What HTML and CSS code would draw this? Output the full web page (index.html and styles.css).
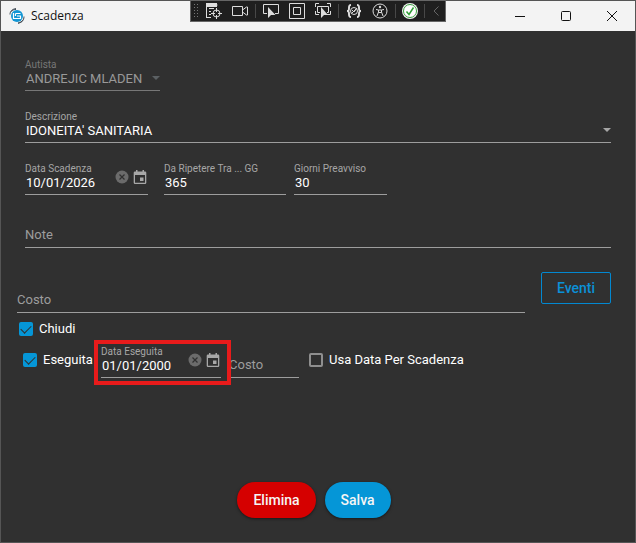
FILE: index.html
```html
<!DOCTYPE html>
<html lang="it">
<head>
<meta charset="utf-8">
<meta name="viewport" content="width=device-width, initial-scale=1">
<title>Scadenza</title>
<link rel="stylesheet" href="styles.css">
</head>
<body>
<div class="window">
  <header class="titlebar">
    <svg class="app-icon" viewBox="0 0 16 16" aria-hidden="true">
      <circle cx="8" cy="8" r="6" fill="#1296d4"/>
      <path d="M1 6.500C1 3 3.500 1 7 .6M2.200 3.500C3.500 2 5 1.500 7 1.400M15 8.500c0 4-2.500 6-6 6.900M14 12.300c-1.200 1.500-2.800 2.200-4.700 2.400" fill="none" stroke="#3c4650" stroke-width="1"/>
      <path d="M4.500 5v5.500h7V8H8M6.500 5.500h5M6.500 5.500v2.500" fill="none" stroke="#fff" stroke-width="1.200"/>
    </svg>
    <h1 class="title">Scadenza</h1>
    <div class="caption-buttons">
      <button type="button" class="caption" aria-label="Riduci a icona"><svg viewBox="0 0 12 12"><path d="M1 6.500h10"/></svg></button>
      <button type="button" class="caption" aria-label="Ingrandisci"><svg viewBox="0 0 12 12"><rect x="1.500" y="1.500" width="9" height="9" rx="1"/></svg></button>
      <button type="button" class="caption" aria-label="Chiudi finestra"><svg viewBox="0 0 12 12"><path d="M1 1l10 10M11 1L1 11"/></svg></button>
    </div>
  </header>

  <div class="debugbar" role="toolbar" aria-label="Strumenti">
    <span class="grip"></span>
    <button type="button" class="tool" aria-label="Albero visuale"><svg viewBox="0 0 16 16"><path d="M.5 1v14M.5 2h11M3 5.500h5M3 8.500h2M3 11.500h2M.5 14.500H5"/><path d="M0 0h11v4H0z" fill="#ddd" stroke="none"/><circle cx="10.500" cy="10.500" r="3.500"/><path d="M10.500 5v4M10.500 12v4M5 10.500h4M12 10.500h4"/></svg></button>
    <button type="button" class="tool" aria-label="Registra"><svg viewBox="0 0 16 16"><path d="M.5 3.500h10v9H.5zM10.500 7l4-3h1v8h-1l-4-3"/></svg></button>
    <span class="separator"></span>
    <button type="button" class="tool" aria-label="Seleziona elemento"><svg viewBox="0 0 16 16"><path d="M4 10.500H.5v-9h15v9H12"/><path d="M5 4v11l3-3h4.500z" fill="#ddd" stroke="none"/></svg></button>
    <button type="button" class="tool" aria-label="Mostra layout"><svg viewBox="0 0 16 16"><path d="M.5 .5h15v15H.5zM4.500 4.500h7v7h-7z"/></svg></button>
    <button type="button" class="tool" aria-label="Traccia elemento attivo"><svg viewBox="0 0 16 16"><path d="M.5 4V.5H4M12 .5h3.500V4M.5 8v3.500H4M15.500 8v3.500H12M5 9.500H2.500v-6h11v6H12"/><path d="M6 4v11l3-3h4z" fill="#ddd" stroke="none"/></svg></button>
    <span class="separator"></span>
    <button type="button" class="tool" aria-label="Errori di binding"><svg viewBox="0 0 16 16"><path d="M5 2C3 2 3 3 3 5s0 3-2 3c2 0 2 1 2 3s0 3 2 3M11 2c2 0 2 1 2 3s0 3 2 3c-2 0-2 1-2 3s0 3-2 3" stroke-width="2"/><circle cx="8" cy="8" r="3.500"/><path d="M5.500 10.500l5-5M6 7l2 2 3-4"/></svg></button>
    <button type="button" class="tool" aria-label="Accessibilità"><svg viewBox="0 0 16 16"><circle cx="8" cy="8" r="7"/><circle cx="8" cy="4" r="1.200" fill="#ddd" stroke="none"/><path d="M4 6.500l2.500 .5v2L5 13M12 6.500L9.500 7v2l1.500 4M6.500 7h3M6.500 9.500h3"/></svg></button>
    <span class="separator"></span>
    <button type="button" class="tool tool-check" aria-label="Ricaricamento rapido"><svg viewBox="0 0 16 16"><circle cx="8" cy="8" r="8" fill="#eee" stroke="none"/><circle cx="8" cy="8" r="6.500" stroke="#3aa13f" fill="#fff"/><path d="M4.500 8.500l2.500 3L11.500 4.500" stroke="#2f9e36" stroke-width="1.500"/></svg></button>
    <span class="separator"></span>
    <button type="button" class="tool tool-collapse" aria-label="Comprimi"><svg viewBox="0 0 16 16"><path d="M10.500 3.500L6 8l4.500 4.500" stroke="#666"/></svg></button>
  </div>

  <form class="form">
    <div class="field field-driver">
      <label for="autista">Autista</label>
      <div class="control">
        <select id="autista" disabled><option>ANDREJIC MLADEN</option></select>
        <svg class="arrow" viewBox="0 0 8 4" aria-hidden="true"><path d="M0 0h8L4 4z"/></svg>
      </div>
    </div>

    <div class="field">
      <label for="descrizione">Descrizione</label>
      <div class="control">
        <select id="descrizione"><option>IDONEITA' SANITARIA</option></select>
        <svg class="arrow" viewBox="0 0 8 4" aria-hidden="true"><path d="M0 0h8L4 4z"/></svg>
      </div>
    </div>

    <div class="row-dates">
      <div class="field field-date">
        <label for="scadenza">Data Scadenza</label>
        <div class="control">
          <input id="scadenza" type="text" value="10/01/2026">
          <button type="button" class="icon-button" aria-label="Cancella data scadenza"><svg viewBox="0 0 14 14"><circle cx="7" cy="7" r="6.500" fill="#6b6b6b"/><path d="M4.500 4.500l5 5M9.500 4.500l-5 5" stroke="#303030" stroke-width="1.200"/></svg></button>
          <button type="button" class="icon-button" aria-label="Scegli data scadenza"><svg viewBox="0 0 14 14"><path d="M3 0h1.500v1.500h5V0H11v1.500h1A1.300 1.300 0 0 1 13.300 2.800V12.700A1.300 1.300 0 0 1 12 14H2A1.300 1.300 0 0 1 .7 12.700V2.800A1.300 1.300 0 0 1 2 1.500h1zM2 5v7.700h10V5zM7 7.500h3.500V11H7z" fill="#a8a8a8" fill-rule="evenodd"/></svg></button>
        </div>
      </div>
      <div class="field field-repeat">
        <label for="ripetere">Da Ripetere Tra ... GG</label>
        <div class="control"><input id="ripetere" type="text" value="365"></div>
      </div>
      <div class="field field-notice">
        <label for="preavviso">Giorni Preavviso</label>
        <div class="control"><input id="preavviso" type="text" value="30"></div>
      </div>
    </div>

    <div class="field field-empty field-note">
      <input type="text" aria-label="Note" placeholder="Note">
    </div>

    <div class="row-cost">
      <div class="field field-empty field-grow">
        <input type="text" aria-label="Costo" placeholder="Costo">
      </div>
      <button type="button" class="outlined">Eventi</button>
    </div>

    <label class="check check-close"><input type="checkbox" checked><span>Chiudi</span></label>

    <div class="row-done">
      <label class="check"><input type="checkbox" checked><span>Eseguita</span></label>
      <div class="field field-done highlighted">
        <label for="eseguita">Data Eseguita</label>
        <div class="control">
          <input id="eseguita" type="text" value="01/01/2000">
          <button type="button" class="icon-button" aria-label="Cancella data eseguita"><svg viewBox="0 0 14 14"><circle cx="7" cy="7" r="6.500" fill="#6b6b6b"/><path d="M4.500 4.500l5 5M9.500 4.500l-5 5" stroke="#303030" stroke-width="1.200"/></svg></button>
          <button type="button" class="icon-button" aria-label="Scegli data eseguita"><svg viewBox="0 0 14 14"><path d="M3 0h1.500v1.500h5V0H11v1.500h1A1.300 1.300 0 0 1 13.300 2.800V12.700A1.300 1.300 0 0 1 12 14H2A1.300 1.300 0 0 1 .7 12.700V2.800A1.300 1.300 0 0 1 2 1.500h1zM2 5v7.700h10V5zM7 7.500h3.500V11H7z" fill="#a8a8a8" fill-rule="evenodd"/></svg></button>
        </div>
      </div>
      <div class="field field-empty field-done-cost">
        <input type="text" aria-label="Costo eseguita" placeholder="Costo">
      </div>
      <label class="check check-use"><input type="checkbox"><span>Usa Data Per Scadenza</span></label>
    </div>

    <div class="actions">
      <button type="button" class="pill pill-delete">Elimina</button>
      <button type="submit" class="pill pill-save">Salva</button>
    </div>
  </form>
</div>
</body>
</html>
```
FILE: styles.css
```css
* {
  box-sizing: border-box;
}

body {
  margin: 0;
  font-family: Roboto, "Liberation Sans", sans-serif;
  font-size: 13px;
  font-weight: 400;
  line-height: 16px;
  color: #fff;
  background: #303030;
}

button,
input,
select {
  margin: 0;
  padding: 0;
  border: 0;
  background: none;
  color: inherit;
  font: inherit;
}

svg {
  display: block;
}

.window {
  position: relative;
  display: flex;
  flex-direction: column;
  min-height: 100vh;
  border: 1px solid #555;
}

/* Title bar */
.titlebar {
  display: flex;
  align-items: center;
  height: 30px;
  padding-left: 8px;
  background: #f3f3f3;
  color: #111;
}

.app-icon {
  width: 16px;
  height: 16px;
}

.title {
  flex: 1;
  margin: 0 0 0 6px;
  font-family: "Open Sans", "Noto Sans", sans-serif;
  font-size: 12px;
  font-weight: 400;
}

.caption-buttons {
  display: flex;
  height: 100%;
}

.caption {
  display: grid;
  place-items: center;
  width: 46px;
}

.caption svg {
  width: 12px;
  height: 12px;
  fill: none;
  stroke: #111;
}

/* Floating toolbar over the title bar */
.debugbar {
  position: absolute;
  top: -1px;
  left: 50%;
  display: flex;
  height: 22px;
  border: 1px solid #666;
  background: #1f1f1f;
  transform: translateX(-50%);
}

.grip {
  width: 6px;
  margin: 2px;
  background: radial-gradient(circle, #777 1px, transparent 1px) 0 0 / 3px 3px;
}

.tool {
  display: grid;
  place-items: center;
  width: 26px;
}

.tool-check {
  width: 24px;
}

.tool-collapse {
  width: 18px;
}

.tool svg {
  width: 16px;
  height: 16px;
  fill: none;
  stroke: #ddd;
}

.separator {
  width: 1px;
  margin: 3px 2px;
  background: #484848;
}

/* Form */
.form {
  flex: 1;
  display: flex;
  flex-direction: column;
  padding: 28px 24px 24px;
}

.field {
  display: flex;
  flex-direction: column;
  margin-bottom: 20px;
  border-bottom: 1px solid #9d9d9d;
}

.field label {
  font-size: 10px;
  font-weight: 400;
  line-height: 12px;
  color: #a6a6a6;
  white-space: nowrap;
}

.control {
  display: flex;
  align-items: center;
  height: 19px;
  padding-bottom: 3px;
}

.control input,
.control select {
  flex: 1;
  min-width: 0;
  height: 16px;
  padding-left: 1px;
  appearance: none;
  color: #fff;
  outline: 0;
}

.arrow {
  width: 8px;
  height: 4px;
  margin-bottom: 2px;
  fill: #a6a6a6;
}

.field-driver {
  width: 135px;
  border-color: #777;
}

.field-driver label {
  color: #777;
}

.control select:disabled {
  color: #999;
  opacity: 1;
}

.field-driver .arrow {
  fill: #5b6063;
}

.icon-button {
  width: 14px;
  height: 14px;
  margin: -12px 1px 0 3px;
}

.field-empty input {
  width: 100%;
  height: 31px;
  padding: 10px 0 5px;
  outline: 0;
}

.field-empty input::placeholder {
  color: #9d9d9d;
  opacity: 1;
}

.row-dates {
  display: flex;
}

.field-date {
  width: 123px;
  margin-right: 16px;
}

.field-repeat {
  width: 122px;
  margin-right: 8px;
}

.field-notice {
  width: 93px;
}

.field-note {
  margin-top: 1px;
}

.row-cost {
  display: flex;
  align-items: flex-start;
  gap: 16px;
  margin: 4px 0 6px -8px;
}

.field-grow {
  flex: 1;
  margin: 9px 0 0;
}

.outlined {
  width: 70px;
  height: 32px;
  border: 1px solid #0288d1;
  border-radius: 2px;
  color: #0b90d8;
  font-size: 14px;
  font-weight: 500;
}

.check {
  display: flex;
  align-items: center;
  gap: 6px;
  height: 20px;
  white-space: nowrap;
}

.check input {
  display: grid;
  place-items: center;
  width: 14px;
  height: 14px;
  appearance: none;
  border: 2px solid #8f8f8f;
  border-radius: 2px;
}

.check input:checked {
  border-color: #0596d7;
  background: #0596d7;
}

.check input:checked::before {
  content: "";
  width: 9px;
  height: 5px;
  border: solid #303030;
  border-width: 0 0 1px 1px;
  transform: translateY(-1px) rotate(-45deg);
}

.check-close {
  align-self: flex-start;
  margin-left: -6px;
}

.row-done {
  display: flex;
  margin: 7px 0 0 -2px;
}

.row-done .check {
  margin-top: 4px;
}

.row-done .field {
  margin-bottom: 0;
}

.field-done {
  width: 120px;
  margin: 0 8px;
}

.row-done .check:first-child {
  width: 70px;
}

.highlighted {
  position: relative;
}

.highlighted::after {
  content: "";
  position: absolute;
  inset: -6px -10px -8px -7px;
  border: 4px solid #e81b1b;
  pointer-events: none;
}

.field-done-cost {
  width: 70px;
  margin-right: 10px;
}

.actions {
  display: flex;
  justify-content: center;
  gap: 9px;
  margin-top: auto;
  padding-right: 8px;
}

.pill {
  height: 36px;
  padding: 0 16px;
  border-radius: 18px;
  color: #f5f5f5;
  font-size: 14px;
  font-weight: 500;
  box-shadow: 0 1px 3px rgba(0, 0, 0, 0.5);
}

.pill-delete {
  background: #d50000;
}

.pill-save {
  background: #0596d7;
}
```
